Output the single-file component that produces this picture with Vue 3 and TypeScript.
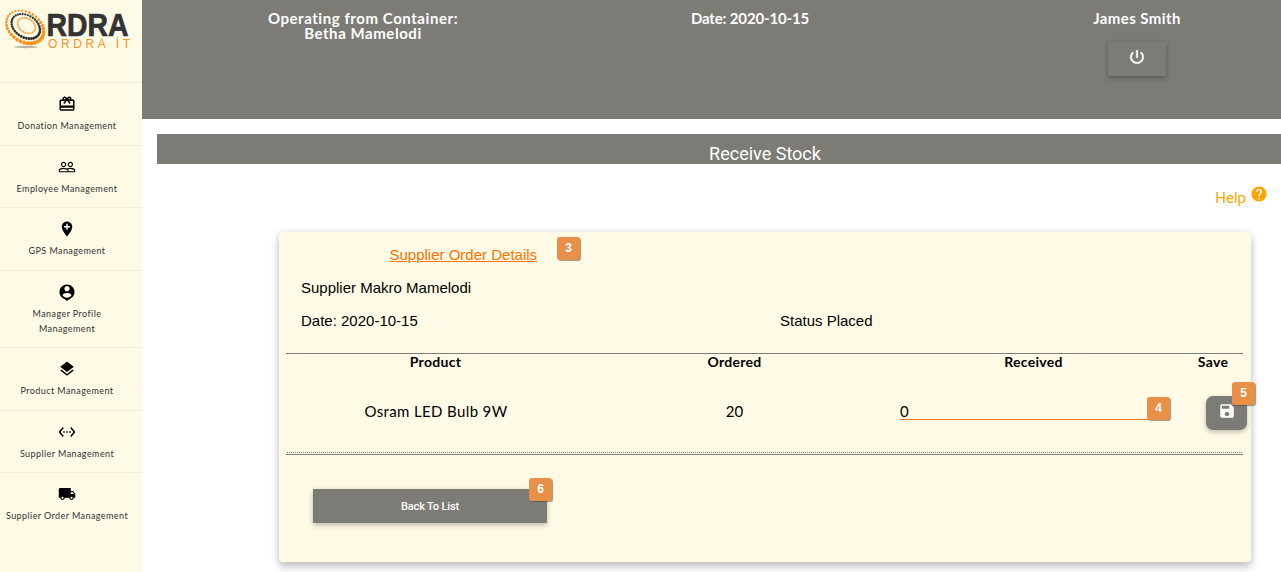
<script setup lang="ts">
import { ref } from 'vue'

interface NavItem {
  label: string
  icon: string
  tall?: boolean
}

const navItems: NavItem[] = [
  {
    label: 'Donation Management',
    icon: 'M20 6h-2.18c.11-.31.18-.65.18-1 0-1.66-1.34-3-3-3-1.05 0-1.96.54-2.5 1.35l-.5.67-.5-.68C10.96 2.54 10.05 2 9 2 7.34 2 6 3.34 6 5c0 .35.07.69.18 1H4c-1.11 0-1.99.89-1.99 2L2 19c0 1.11.89 2 2 2h16c1.11 0 2-.89 2-2V8c0-1.11-.89-2-2-2zm-5-2c.55 0 1 .45 1 1s-.45 1-1 1-1-.45-1-1 .45-1 1-1zM9 4c.55 0 1 .45 1 1s-.45 1-1 1-1-.45-1-1 .45-1 1-1zm11 15H4v-2h16v2zm0-5H4V8h5.08L7 10.83 8.62 12 11 8.76l1-1.36 1 1.36L15.38 12 17 10.83 14.92 8H20v6z',
  },
  {
    label: 'Employee Management',
    icon: 'M16.5 13c-1.2 0-3.07.34-4.5 1-1.43-.67-3.3-1-4.5-1C5.33 13 1 14.08 1 16.25V19h22v-2.75c0-2.17-4.33-3.25-6.5-3.25zm-4 4.500h-10v-1.250c0-.54 2.560-1.750 5-1.750s5 1.210 5 1.750v1.250zm9 0H14v-1.250c0-.46-.2-.86-.52-1.220.88-.3 1.960-.53 3.020-.53 2.440 0 5 1.210 5 1.750v1.250zM7.500 12c1.930 0 3.500-1.570 3.500-3.500S9.430 5 7.500 5 4 6.570 4 8.500 5.570 12 7.500 12zm0-5.500c1.100 0 2 .9 2 2s-.9 2-2 2-2-.9-2-2 .9-2 2-2zm9 5.500c1.930 0 3.500-1.570 3.500-3.500S18.430 5 16.500 5 13 6.570 13 8.500s1.570 3.500 3.500 3.500zm0-5.500c1.100 0 2 .9 2 2s-.9 2-2 2-2-.9-2-2 .9-2 2-2z',
  },
  {
    label: 'GPS Management',
    icon: 'M12 2C8.14 2 5 5.14 5 9c0 5.25 7 13 7 13s7-7.750 7-13c0-3.860-3.140-7-7-7zm4 8h-3v3h-2v-3H8V8h3V5h2v3h3v2z',
  },
  {
    label: 'Manager Profile Management',
    tall: true,
    icon: 'M12 2C6.480 2 2 6.480 2 12c0 4.500 3 8.300 7 9.550L12 24l3-2.450c4-1.250 7-5.050 7-9.550 0-5.520-4.480-10-10-10zm0 2c1.930 0 3.500 1.570 3.500 3.500S13.930 11 12 11 8.500 9.430 8.500 7.500 10.070 4 12 4zm0 15.500c-2.500 0-4.710-1.280-6-3.220.03-1.990 4-3.080 6-3.080s5.970 1.090 6 3.080c-1.290 1.940-3.500 3.220-6 3.220z',
  },
  {
    label: 'Product Management',
    icon: 'M11.990 18.540l-7.370-5.730L3 14.070l9 7 9-7-1.630-1.270-7.380 5.740zM12 16l7.360-5.730L21 9l-9-7-9 7 1.630 1.270L12 16z',
  },
  {
    label: 'Supplier Management',
    icon: 'M7.770 6.760L6.230 5.480.82 12l5.410 6.520 1.540-1.280L3.420 12l4.350-5.240zM7 13h2v-2H7v2zm10-2h-2v2h2v-2zm-6 2h2v-2h-2v2zm6.770-7.520l-1.540 1.280L20.580 12l-4.350 5.240 1.540 1.280L23.180 12l-5.410-6.520z',
  },
  {
    label: 'Supplier Order Management',
    icon: 'M20 8h-3V4H3c-1.100 0-2 .9-2 2v11h2c0 1.660 1.340 3 3 3s3-1.340 3-3h6c0 1.660 1.340 3 3 3s3-1.340 3-3h2v-5l-3-4zM6 18.500c-.83 0-1.500-.67-1.500-1.500s.67-1.500 1.500-1.500 1.500.67 1.500 1.500-.67 1.500-1.500 1.500zm13.500-9l1.960 2.500H17V9.500h2.500zM18 18.500c-.83 0-1.500-.67-1.500-1.500s.67-1.500 1.500-1.500 1.500.67 1.500 1.500-.67 1.500-1.500 1.500z',
  },
]

// Beads of the two rings in the logo
interface Bead { x: number; y: number; r: number }
function ring(count: number, rx: number, ry: number, r: number, grow: number): Bead[] {
  return Array.from({ length: count }, (_, i) => {
    const a = (i / count) * Math.PI * 2
    return { x: rx * Math.cos(a), y: ry * Math.sin(a), r: r + grow * (1 + Math.cos(a - 0.7)) }
  })
}
const outerBeads = ring(32, 20, 14.8, 1.1, 0.5)
const innerBeads = ring(34, 15.3, 11, 1.1, 0.2)

const received = ref('0')
</script>

<template>
  <div class="page">
    <aside class="sidebar">
      <div class="brand">
        <svg width="142" height="60" viewBox="0 0 142 60">
          <ellipse cx="26" cy="47" rx="12" ry="1.200" fill="#b9b5a8" />
          <g transform="translate(25 27) rotate(32)">
            <circle v-for="(b, i) in outerBeads" :key="'o' + i" :cx="b.x" :cy="b.y" :r="b.r" fill="#f7941e" />
            <circle v-for="(b, i) in innerBeads" :key="'i' + i" :cx="b.x + 0.3" :cy="b.y - 1" :r="b.r" fill="#333" />
            <ellipse cx="0.500" cy="-2" rx="9.500" ry="7" fill="none" stroke="#f7a13c" stroke-width="1.600" stroke-dasharray="1.500 .4" />
          </g>
          <text x="46.500" y="35.500" class="logo-main" textLength="82" lengthAdjust="spacingAndGlyphs">RDRA</text>
          <text x="48" y="47.500" class="logo-sub" textLength="82">ORDRA İT</text>
        </svg>
      </div>
      <nav>
        <a v-for="item in navItems" :key="item.label" class="nav-item" :class="{ tall: item.tall }">
          <svg class="nav-icon" viewBox="0 0 24 24"><path :d="item.icon" /></svg>
          <span class="nav-label">{{ item.label }}</span>
        </a>
      </nav>
    </aside>

    <main class="main">
      <header class="topbar">
        <div class="top-col"><span class="container-name">Operating from Container:<br />Betha Mamelodi</span></div>
        <div class="top-col"><span class="top-date">Date: 2020-10-15</span></div>
        <div class="top-col">
          <span class="user">James Smith</span>
          <button class="power" aria-label="Log out">
            <svg width="18" height="18" viewBox="0 0 24 24"><path fill="#fff" stroke="#fff" stroke-width=".6" d="M13 3h-2v10h2V3zm4.830 2.170l-1.420 1.420C17.990 7.860 19 9.810 19 12c0 3.870-3.130 7-7 7s-7-3.130-7-7c0-2.190 1.010-4.140 2.580-5.420L6.170 5.170C4.230 6.820 3 9.260 3 12c0 4.970 4.030 9 9 9s9-4.030 9-9c0-2.740-1.230-5.180-3.170-6.830z" /></svg>
          </button>
        </div>
      </header>

      <div class="title-bar"><h1>Receive Stock</h1></div>

      <div class="help">
        <span>Help</span>
        <svg width="18" height="18" viewBox="0 0 24 24"><path fill="#ffa500" d="M12 2C6.480 2 2 6.480 2 12s4.480 10 10 10 10-4.480 10-10S17.520 2 12 2zm1 17h-2v-2h2v2zm2.070-7.750l-.9.920C13.450 12.900 13 13.500 13 15h-2v-.5c0-1.100.45-2.100 1.170-2.830l1.240-1.260c.37-.36.59-.86.59-1.410 0-1.100-.9-2-2-2s-2 .9-2 2H8c0-2.210 1.790-4 4-4s4 1.790 4 4c0 .88-.36 1.680-.93 2.250z" /></svg>
      </div>

      <section class="card">
        <div class="heading">
          <a>Supplier Order Details</a>
          <span class="badge badge-heading">3</span>
        </div>
        <div class="line">Supplier Makro Mamelodi</div>
        <div class="line split"><span>Date: 2020-10-15</span><span>Status Placed</span></div>

        <div class="table">
          <div class="row head">
            <span>Product</span>
            <span>Ordered</span>
            <span>Received</span>
            <span>Save</span>
          </div>
          <div class="row body">
            <span class="product">Osram LED Bulb 9W</span>
            <span class="qty">20</span>
            <span class="field">
              <input v-model="received" />
              <span class="badge badge-input">4</span>
            </span>
            <span class="save-cell">
              <button class="save" aria-label="Save">
                <svg width="18" height="18" viewBox="0 0 24 24"><path fill="#fff" d="M17 3H5c-1.110 0-2 .9-2 2v14c0 1.100.89 2 2 2h14c1.100 0 2-.9 2-2V7l-4-4zm-5 16c-1.660 0-3-1.340-3-3s1.340-3 3-3 3 1.340 3 3-1.340 3-3 3zm3-10H5V5h10v4z" /></svg>
                <span class="badge badge-save">5</span>
              </button>
            </span>
          </div>
          <div class="dots"></div>
        </div>

        <button class="back"><span>Back To List</span><span class="badge badge-back">6</span></button>
      </section>
    </main>
  </div>
</template>

<style>
html, body { overflow: hidden; background: #fff; }
</style>

<style scoped>
* { box-sizing: border-box; }
.page { display: flex; width: 1281px; height: 572px; overflow: hidden; font-family: Lato, "Liberation Sans", sans-serif; color: #000; }
button { border: 0; padding: 0; background: #7d7b76; color: #fff; position: relative; display: flex; justify-content: center; }

.sidebar { width: 142px; flex: none; background: #fffae6; }
.brand { height: 82px; }
.brand svg { display: block; overflow: visible; }
.logo-main { font: 700 32px "Liberation Sans", sans-serif; fill: #333; stroke: #333; stroke-width: .7px; }
.logo-sub { font: 400 12px "Liberation Sans", sans-serif; fill: #f7941e; }
.nav-item { height: 62.500px; padding: 12px 8px 0 0; border-top: 1px solid #f3ecd9; display: flex; flex-direction: column; align-items: center; white-space: nowrap; }
.nav-item.tall { height: 77.500px; white-space: normal; }
.nav-icon { width: 18px; height: 18px; flex: none; }
.nav-label { margin-top: 5px; font-size: 9px; line-height: 15px; letter-spacing: 0.420px; text-align: center; color: #333; }
.nav-item.tall .nav-label { width: 90px; }

.main { flex: 1; min-width: 0; }
.topbar { height: 119px; background: #7d7b76; color: #fff; display: grid; grid-template-columns: repeat(3, 387px); padding-left: 27.500px; overflow: hidden; font-weight: 700; font-size: 15px; line-height: 15px; }
.top-col { padding-top: 11px; display: flex; flex-direction: column; align-items: center; text-align: center; }
.container-name { letter-spacing: .560px; }
.top-date { letter-spacing: -.150px; }
.user { letter-spacing: .420px; }
.power { margin-top: 16px; width: 58px; height: 34px; padding-top: 6px; box-shadow: 0 2px 5px rgba(0, 0, 0, .2), 0 2px 6px rgba(0, 0, 0, .1); }

.title-bar { margin: 15px 0 0 15px; height: 30px; background: #7d7b76; overflow: hidden; }
.title-bar h1 { margin: 0; width: 1216px; text-align: center; color: #fff; font: 400 18px/39px Roboto, sans-serif; }
.help { display: flex; justify-content: flex-end; padding: 21px 13px 0 0; height: 68px; color: #ffa500; font: 400 15px/26px Roboto, sans-serif; }
.help svg { margin-left: 4px; }

.card { margin-left: 137px; width: 972px; height: 330px; background: #fffae6; border-radius: 4px; padding: 6px 8px 0 7px; box-shadow: 0 5px 8px rgba(0, 0, 0, .22), 0 0 8px rgba(0, 0, 0, .08); font: 15px/33px "Liberation Sans", Arial, sans-serif; }
.heading { position: relative; height: 33px; padding-left: 103.500px; color: #ff7300; }
.heading a { text-decoration: underline; }
.line { height: 33px; padding-left: 15px; }
.split { display: grid; grid-template-columns: 479px 1fr; }
.table { margin-top: 16px; height: 102px; border-top: 1px solid #7d7b76; border-bottom: 1px solid #7d7b76; font-family: Lato, sans-serif; }
.row { display: grid; grid-template-columns: 299px 299px 299px 60px; text-align: center; }
.head { height: 18px; line-height: 16px; font-size: 14px; font-weight: 700; letter-spacing: .300px; }
.body { height: 80px; line-height: 78px; font-size: 15px; }
.product { letter-spacing: .370px; padding-left: 1px; }
.dots { border-top: 1px dotted #7d7b76; margin: 0 1px; }
.field { position: relative; padding: 28px 0 0 16px; display: block; line-height: 20px; text-align: left; }
input { display: block; width: 269px; height: 20px; padding: 2px 0 0; border: 0; border-bottom: 1px solid #f07818; outline: 0; background: transparent; font: 15px Lato, sans-serif; color: #000; }
.save-cell { padding: 24px 0 0 23px; }
.save { width: 41px; height: 34px; border-radius: 7px; padding-top: 6px; box-shadow: 0 2px 5px rgba(0, 0, 0, .25); }
.back { margin: 34px 0 0 27px; width: 234px; height: 34px; font: 500 11px/35px Roboto, sans-serif; letter-spacing: -.150px; box-shadow: 0 2px 5px rgba(0, 0, 0, .26); }

.badge { position: absolute; width: 23px; height: 23px; border-radius: 3px; background: #e88f48; color: #fff; font: 700 12px/22px "Liberation Sans", Arial, sans-serif; letter-spacing: 0; text-align: center; box-shadow: 1px 1px 1px rgba(70, 70, 70, .55); }
.badge-heading { left: 271px; top: -1px; }
.badge-input { left: 263px; top: 25px; }
.badge-save { left: 26px; top: -14px; }
.badge-back { left: 216px; top: -11px; }
</style>
